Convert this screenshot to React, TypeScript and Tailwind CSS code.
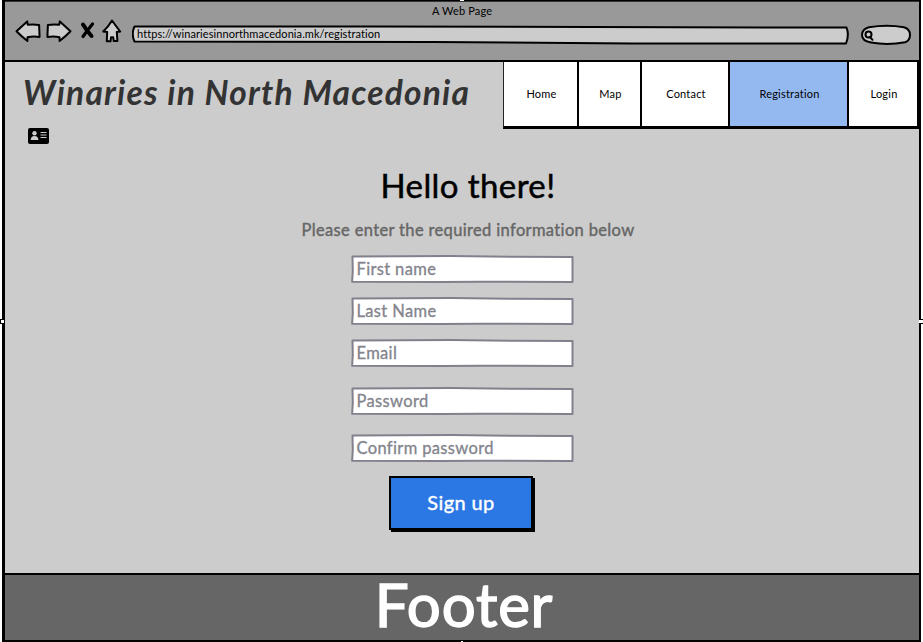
import React from "react";

const font = "font-[Lato,'Open_Sans',sans-serif]";

function Arrow({ flip = false }: { flip?: boolean }) {
  return (
    <svg className={flip ? "h-[24px] w-[26px] -scale-x-100" : "h-[24px] w-[26px]"} viewBox="0 0 26 24" fill="#ccc" stroke="#000" strokeWidth="2" strokeLinejoin="round">
      <path d="M1.5 12.3 12.2 2.4l.6 3.4q5-.6 11.3.1l.5 12q-6.5-.9-12.1.3l-.1 3.8Q6.5 17.500 1.500 12.300Z" />
    </svg>
  );
}

function BrowserBar() {
  return (
    <header className="relative flex h-[61px] shrink-0 items-start border-b-2 border-black bg-[#999]">
      <div className="absolute inset-x-0 top-0 h-px bg-[#333]" />
      <div className="absolute left-[427px] top-[3px] whitespace-nowrap text-[11px] leading-[14px] tracking-[0.15px]">A Web Page</div>
      <div className="flex w-[127px] shrink-0 pl-[10px] pt-[18px]">
        <Arrow />
        <div className="ml-[5px]"><Arrow flip /></div>
        <svg className="ml-[8px] h-[24px] w-[15px] shrink-0" viewBox="0 0 15 24" stroke="#000" fill="none" strokeLinecap="round">
          <path d="M3 5.500 Q7 12 11.500 17" strokeWidth="4" />
          <path d="M12.500 5 Q8 10.500 3 17.500" strokeWidth="3.200" />
        </svg>
        <svg className="ml-[7px] h-[24px] w-[20px] shrink-0" viewBox="0 0 20 24" fill="#ccc" stroke="#000" strokeWidth="2" strokeLinejoin="round">
          <path d="M10 1.500q3.500 5 8.200 11l-3.400.4.6 9.200h-3.600l-.6-3.800H9l-.5 4H4.800l.4-9.300-4-.5Q6.500 7.500 10 1.500Z" />
        </svg>
      </div>
      <div className="relative mt-[24px] flex h-[20px] w-[718px] shrink-0 items-center">
        <svg className="absolute inset-0 h-full w-full" viewBox="0 0 718 20" fill="#ccc" stroke="#000" strokeWidth="2" strokeLinejoin="round">
          <path d="M2.500 1.500 240 1.600 460 2 714.500 2.600q3 7-.5 15.900L500 18.400 300 17 2.500 16.500Q-1 9 2.500 1.500Z" />
        </svg>
        <span className="relative pb-px pl-[5px] text-[11px] tracking-[0.08px]">https://winariesinnorthmacedonia.mk/registration</span>
      </div>
      <svg className="ml-[10px] mt-[23px] h-[22px] w-[52px] shrink-0" viewBox="0 0 52 22" fill="#ccc" stroke="#000" strokeWidth="2">
        <path d="M9 3.200Q27 .2 44 3.200q6 2 6 7.500 0 6-5 7.500Q28 21.500 11 18.500 2 17 2 11 2 5 9 3.200Z" />
        <circle cx="8.500" cy="10.600" r="3" />
        <path d="m10 13 2.500 2.800" strokeLinecap="round" />
      </svg>
    </header>
  );
}

const links = [
  { label: "Home", box: "w-[75px] bg-white" },
  { label: "Map", box: "w-[63px] bg-white" },
  { label: "Contact", box: "w-[88px] bg-white" },
  { label: "Registration", box: "w-[119px] bg-[#94b9f1]" },
  { label: "Login", box: "w-[70px] bg-white" },
];

function Nav() {
  return (
    <nav className="flex h-[67px] border-b-[3px] border-l border-b-black border-l-[#222]">
      {links.map((l) => (
        <a key={l.label} className={`flex items-center justify-center border-r-2 border-black pl-[2px] pt-px text-[11px] tracking-[0.2px] ${l.box}`}>
          {l.label}
        </a>
      ))}
    </nav>
  );
}

function IdCard() {
  return (
    <svg className="h-[16px] w-[21px]" viewBox="0 0 21 16">
      <rect width="21" height="16" rx="2" fill="#000" />
      <circle cx="6.500" cy="5.200" r="2.200" fill="#ccc" />
      <path d="M2.700 12c0-2.600 1.400-4 3.800-4s3.900 1.400 3.900 4Z" fill="#ccc" />
      <path d="M12.500 4.500h6M12.500 7h6M12.500 9.500h6" stroke="#ccc" />
    </svg>
  );
}

function Field({ label, gap }: { label: string; gap: string }) {
  return (
    <div className={`relative flex h-[28px] w-[223px] items-center ${gap}`}>
      <svg className="absolute inset-0 h-full w-full" viewBox="0 0 223 28" fill="#fff" stroke="#83808d" strokeWidth="2" strokeLinejoin="round">
        <path d="M1.500 1.500 100 1.100 160 1.800 221.500 1.900v25L130 26.800 90 27 1.100 26.800 1.800 16Z" />
      </svg>
      <span className="relative pb-px pl-[6px] text-[16.5px] leading-[22px] tracking-[0.35px] text-[#83848c] [-webkit-text-stroke:0.3px_#83848c]">{label}</span>
    </div>
  );
}

export default function App() {
  return (
    <div className={`relative h-[642px] w-[923px] overflow-hidden bg-white pl-[2px] text-black ${font}`}>
      <div className="flex h-full w-[919px] flex-col border-l-[3px] border-r-2 border-t border-black bg-[#ccc]">
        <BrowserBar />
        <div className="flex h-[66px] shrink-0 items-start justify-between">
          <h1 className="whitespace-nowrap pl-[18px] pt-[8px] text-[33.5px] font-bold italic leading-[44px] tracking-[1.2px] text-[#333]">Winaries in North Macedonia</h1>
          <Nav />
        </div>
        <div className="h-[36px] shrink-0 pl-[23px]"><IdCard /></div>
        <main className="flex flex-1 flex-col items-center">
          <h2 className="-mt-px pl-[12px] text-[33px] leading-[44px] tracking-[0.4px] [-webkit-text-stroke:0.5px_#000]">Hello there!</h2>
          <p className="mt-[12px] pl-[12px] text-[16.5px] leading-[22px] tracking-[0.35px] text-[#666] [-webkit-text-stroke:0.4px_#666]">Please enter the required information below</p>
          <Field label="First name" gap="mt-[14px]" />
          <Field label="Last Name" gap="mt-[14px]" />
          <Field label="Email" gap="mt-[14px]" />
          <Field label="Password" gap="mt-[20px]" />
          <Field label="Confirm password" gap="mt-[19px]" />
          <button className="mr-[2px] mt-[14px] flex h-[54px] w-[144px] items-center justify-center border-2 border-black bg-[#2b78e4] pb-[2px] text-[20px] tracking-[0.4px] text-white shadow-[2px_2px_0_#000] [-webkit-text-stroke:0.4px_#fff]">Sign up</button>
        </main>
        <footer className="flex h-[69px] shrink-0 items-center justify-center border-y-2 border-black bg-[#666] pb-[7px] pl-[4px] text-[60px] leading-[60px] tracking-[0.8px] text-white [-webkit-text-stroke:1.5px_#fff]">Footer</footer>
      </div>
      <i className="absolute left-0 top-[319px] h-[5px] w-[5px] border border-black bg-white" />
      <i className="absolute right-0 top-[319px] h-[5px] w-[4px] border-y border-black bg-white" />
      <i className="absolute left-[460px] top-0 h-px w-[4px] bg-white" />
      <i className="absolute bottom-0 left-[460px] h-[2px] w-[4px] border-x border-t border-black bg-white" />
    </div>
  );
}
